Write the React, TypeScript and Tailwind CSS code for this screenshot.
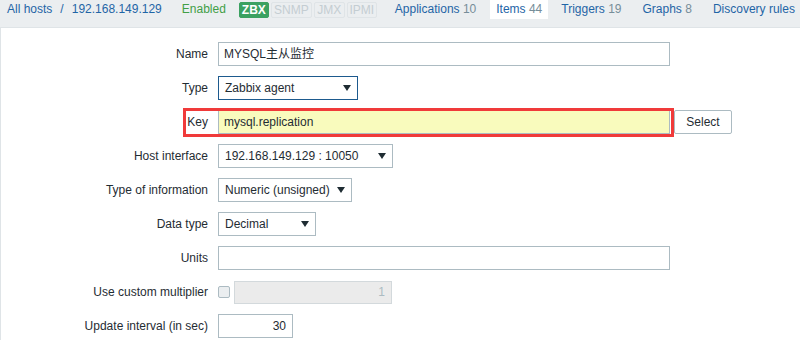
import React from "react";

const Arrow = () => (
  <svg width="8" height="6" viewBox="0 0 8 6" className="shrink-0">
    <path d="M0 0 L8 0 L4 6 Z" fill="#1f2c33" />
  </svg>
);

const Label = ({ children }: { children: React.ReactNode }) => (
  <div className="w-[207px] text-right text-[12px] leading-[24px] text-[#1f2c33] shrink-0">{children}</div>
);

const SelectBox = ({ w, text, focus }: { w: string; text: string; focus?: boolean }) => (
  <div
    className={`${w} h-[24px] border ${focus ? "border-[#1d5a8e]" : "border-[#acbbc2]"} bg-white flex items-center justify-between pl-[6px] pr-[6px] text-[12px] text-[#1f2c33]`}
  >
    <span>{text}</span>
    <Arrow />
  </div>
);

export default function App() {
  return (
    <div className="w-[800px] h-[340px] overflow-hidden bg-white" style={{ fontFamily: '"Liberation Sans", Arial, "Noto Sans CJK SC", sans-serif' }}>
      {/* header */}
      <div className="h-[28px] bg-[#ebeef0] border-b border-[#dfe4e7] flex items-start text-[12px] leading-[19px] whitespace-nowrap">
        <span className="ml-[7px] text-[#1f65a6]">All hosts</span>
        <span className="ml-[8px] text-[#1f65a6]">/</span>
        <span className="ml-[8px] text-[#1f65a6]">192.168.149.129</span>
        <span className="ml-[20px] text-[#429e47]">Enabled</span>
        <div className="ml-[13px] mt-[2px] flex gap-[2px] text-[12px] leading-[14px] font-bold">
          <span className="w-[30px] h-[16px] bg-[#3ba161] border border-[#3ba161] text-white flex items-center justify-center rounded-[2px]">ZBX</span>
          <span className="w-[41px] h-[16px] bg-[#ebeef0] border border-[#dfe4e7] text-[#c4cdd2] font-normal flex items-center justify-center rounded-[2px]">SNMP</span>
          <span className="w-[31px] h-[16px] bg-[#ebeef0] border border-[#dfe4e7] text-[#c4cdd2] font-normal flex items-center justify-center rounded-[2px]">JMX</span>
          <span className="w-[30px] h-[16px] bg-[#ebeef0] border border-[#dfe4e7] text-[#c4cdd2] font-normal flex items-center justify-center rounded-[2px]">IPMI</span>
        </div>
        <span className="ml-[18px] text-[#1f65a6]">Applications <span className="text-[#768d99]">10</span></span>
        <span className="ml-[14px] w-[58px] h-[19px] bg-white pl-[6px] text-[#1f65a6]">Items <span className="text-[#768d99]">44</span></span>
        <span className="ml-[13px] text-[#1f65a6]">Triggers <span className="text-[#768d99]">19</span></span>
        <span className="ml-[21px] text-[#1f65a6]">Graphs <span className="text-[#768d99]">8</span></span>
        <span className="ml-[21px] text-[#1f65a6]">Discovery rules</span>
      </div>

      {/* form */}
      <div className="relative h-[312px] border-l border-[#dfe4e7] pt-[14px] flex flex-col gap-[10px]">
        <div className="flex items-center gap-[10px]">
          <Label>Name</Label>
          <div className="w-[452px] h-[24px] border border-[#acbbc2] flex items-center pl-[5px] text-[12px] text-[#1f2c33]">MYSQL主从监控</div>
        </div>
        <div className="flex items-center gap-[10px]">
          <Label>Type</Label>
          <SelectBox w="w-[140px]" text="Zabbix agent" focus />
        </div>
        <div className="relative flex items-center gap-[10px]">
          <Label>Key</Label>
          <div className="w-[452px] h-[24px] border border-[#acbbc2] bg-[#f9fbbd] flex items-center pl-[5px] text-[12px] text-[#1f2c33]">mysql.replication</div>
          <div className="ml-[-6px] w-[58px] h-[24px] border border-[#acbbc2] rounded-[2px] bg-white flex items-center justify-center text-[12px] text-[#1f2c33]">Select</div>
          <div className="absolute left-[182px] top-[-2px] w-[491px] h-[29px] border-[3px] border-[#f03a3a] pointer-events-none" />
        </div>
        <div className="flex items-center gap-[10px]">
          <Label>Host interface</Label>
          <SelectBox w="w-[175px]" text="192.168.149.129 : 10050" />
        </div>
        <div className="flex items-center gap-[10px]">
          <Label>Type of information</Label>
          <SelectBox w="w-[134px]" text="Numeric (unsigned)" />
        </div>
        <div className="flex items-center gap-[10px]">
          <Label>Data type</Label>
          <SelectBox w="w-[98px]" text="Decimal" />
        </div>
        <div className="flex items-center gap-[10px]">
          <Label>Units</Label>
          <div className="w-[452px] h-[24px] border border-[#acbbc2]" />
        </div>
        <div className="flex items-center gap-[10px]">
          <Label>Use custom multiplier</Label>
          <div className="w-[12px] h-[12px] border border-[#acbbc2] rounded-[2px] bg-[#ebeef0]" />
          <div className="ml-[-6px] w-[158px] h-[23px] border border-[#d3d9dc] bg-[#ebebeb] flex items-center justify-end pr-[6px] text-[12px] text-[#acbbc2]">1</div>
        </div>
        <div className="flex items-center gap-[10px]">
          <Label>Update interval (in sec)</Label>
          <div className="w-[75px] h-[24px] border border-[#acbbc2] flex items-center justify-end pr-[6px] text-[12px] text-[#1f2c33]">30</div>
        </div>
      </div>
    </div>
  );
}
